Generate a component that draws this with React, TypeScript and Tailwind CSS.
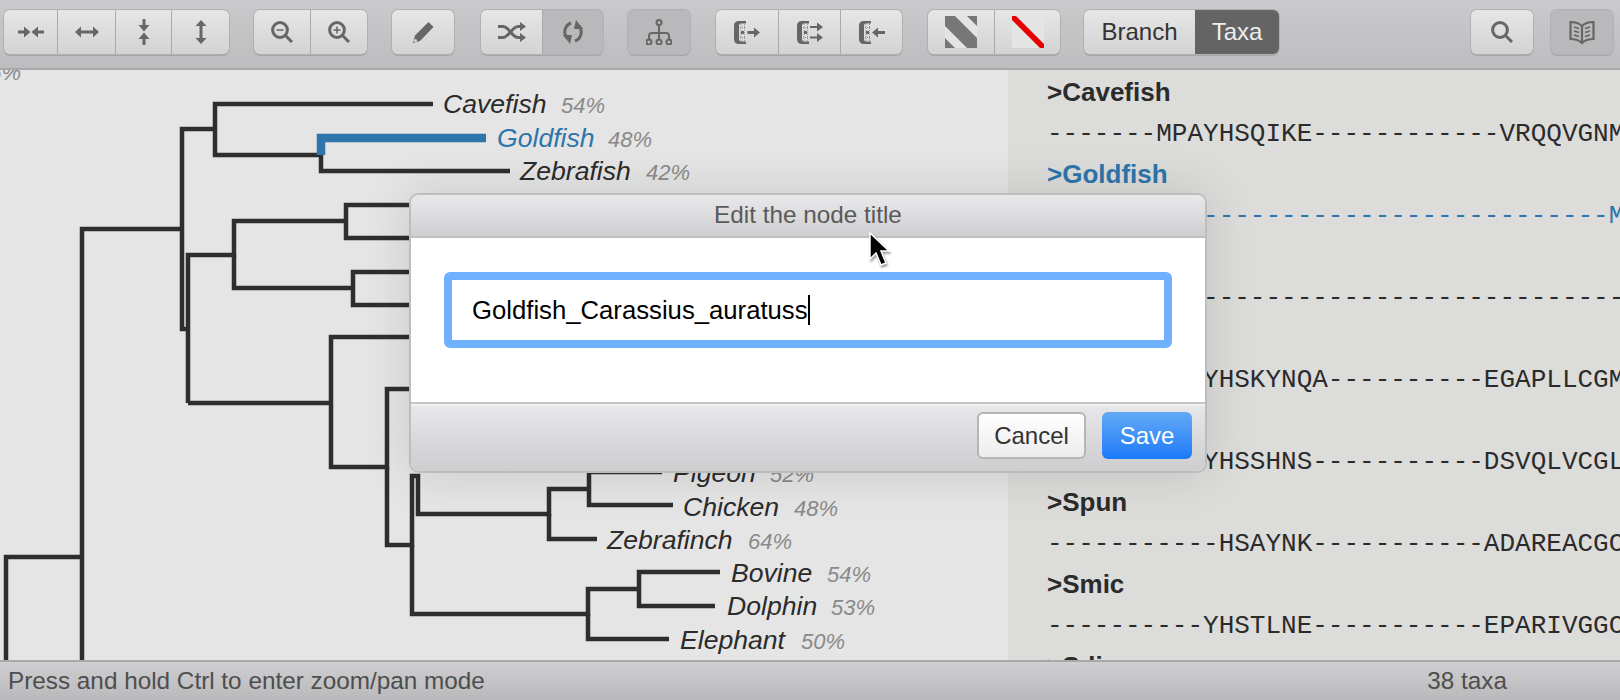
import { ReactNode } from "react";

// tree branches, in page coordinates (svg viewBox starts at y=70)
const branches = [
  "M433 104H215V155H321V171H510",
  "M215 129H182V329H188",
  "M82 660V229H182",
  "M6 660V557H82",
  "M188 660M188 403V255H234V221H346V205H460M346 221V238H460",
  "M234 255V288H353V272H460M353 288V305H460",
  "M188 403H331V337H460M331 403V467H387V389H460",
  "M387 467V545H412V476H418V514H549V489H589V472H662M589 489V505H673",
  "M549 514V539H597",
  "M412 545V614H588V589H639V572H720M639 589V606H715",
  "M588 614V639H669",
];

const labels = [
  { name: "Cavefish", pct: "54%", x: 443, y: 113, px: 561 },
  { name: "Goldfish", pct: "48%", x: 497, y: 147, px: 608, blue: true },
  { name: "Zebrafish", pct: "42%", x: 520, y: 180, px: 646 },
  { name: "Pigeon", pct: "52%", x: 673, y: 482, px: 770 },
  { name: "Chicken", pct: "48%", x: 683, y: 516, px: 794 },
  { name: "Zebrafinch", pct: "64%", x: 607, y: 549, px: 748 },
  { name: "Bovine", pct: "54%", x: 731, y: 582, px: 827 },
  { name: "Dolphin", pct: "53%", x: 727, y: 615, px: 831 },
  { name: "Elephant", pct: "50%", x: 680, y: 649, px: 801 },
];

// names that sit fully under the dialog are left blank
const sequences = [
  { name: ">Cavefish", seq: "-------MPAYHSQIKE------------VRQQVGNM" },
  { name: ">Goldfish", seq: "------------------------------------M", blue: true },
  { name: "", seq: "----------------------------------------" },
  { name: "", seq: "----------YHSKYNQA----------EGAPLLCGM" },
  { name: "", seq: "----------YHSSHNS-----------DSVQLVCGL" },
  { name: ">Spun", seq: "-----------HSAYNK-----------ADAREACGC" },
  { name: ">Smic", seq: "----------YHSTLNE-----------EPARIVGGC" },
  { name: ">Sdio", seq: "" },
];

const Btn = ({
  w,
  active,
  children,
}: {
  w: string;
  active?: boolean;
  children: ReactNode;
}) => (
  <div
    className={`${w} flex h-[44px] items-center justify-center border-l border-[#aaa9ab] first:border-l-0 ${
      active ? "bg-[#b9b8ba]" : "bg-gradient-to-b from-[#e6e6e6] to-[#d3d3d3]"
    }`}
  >
    {children}
  </div>
);

const Group = ({ className, children }: { className: string; children: ReactNode }) => (
  <div
    className={`${className} flex h-[44px] overflow-hidden rounded-[6px] shadow-[0_0_0_1px_#b0afb1,0_2px_1px_#a5a4a6]`}
  >
    {children}
  </div>
);

const Lens = ({ mark }: { mark?: "plus" | "minus" }) => (
  <svg width="22" height="22" viewBox="0 0 22 22" fill="none" stroke="#666">
    <circle cx="9" cy="9" r="7.400" strokeWidth="3" />
    <path d="M14.500 14.500L21 21" strokeWidth="3" />
    {mark && <path d="M5.500 9H12.500" strokeWidth="1.500" />}
    {mark === "plus" && <path d="M9 5.500V12.500" strokeWidth="1.500" />}
  </svg>
);

const ArrowsIn = ({ className }: { className?: string }) => (
  <svg className={className} width="26" height="14" viewBox="0 0 26 14" fill="#666">
    <path d="M0 5.500H6V1.500L12.500 7L6 12.500V8.500H0Z" />
    <path d="M26 5.500H20V1.500L13.500 7L20 12.500V8.500H26Z" />
  </svg>
);

const ArrowsOut = ({ className }: { className?: string }) => (
  <svg className={className} width="24" height="14" viewBox="0 0 24 14" fill="#666">
    <path d="M0 7L6 1.500V5.500H18V1.500L24 7L18 12.500V8.500H6V12.500Z" />
  </svg>
);

const ColumnIcon = ({ mode }: { mode: "out" | "both" | "in" }) => (
  <svg width="26" height="23" viewBox="0 0 26 23" fill="#666">
    <path d="M12 0H5Q0 0 0 5V18Q0 23 5 23H12V20.500H7Q5 20.500 5 18.500V4.500Q5 2.500 7 2.500H12Z" />
    <path d="M6 6.500H11M6 16.500H11M7 3V20M10.500 3V20" stroke="#888" strokeWidth="0.800" strokeDasharray="1 1" fill="none" />
    <rect x="7" y="10" width="3" height="3" />
    {mode === "out" && <path d="M13.500 10H20V6.500L26 11.500L20 16.500V13H13.500Z" />}
    {mode === "in" && <path d="M26 10H19V6.500L13 11.500L19 16.500V13H26Z" />}
    {mode === "both" && (
      <path d="M13 5H20V1.500L26 6L20 10.500V7H13ZM13 15.500H20V12L26 16.500L20 21V17.500H13Z" />
    )}
  </svg>
);

const App = () => {
  return (
    <div className="relative flex h-[700px] w-[1620px] flex-col overflow-hidden bg-[#e5e5e5] font-['Liberation_Sans',Arial,sans-serif]">
      {/* TOOLBAR */}
      <div className="flex h-[70px] shrink-0 border-b-2 border-[#a9a8aa] bg-gradient-to-b from-[#cac9cb] to-[#bdbcbe] pl-[4px] pr-[7px] pt-[10px]">
        <Group className="mr-[25px]">
          <Btn w="w-[53px]"><ArrowsIn /></Btn>
          <Btn w="w-[58px]"><ArrowsOut /></Btn>
          <Btn w="w-[56px]"><ArrowsIn className="rotate-90" /></Btn>
          <Btn w="w-[58px]"><ArrowsOut className="rotate-90" /></Btn>
        </Group>
        <Group className="mr-[25px]">
          <Btn w="w-[56px]"><Lens mark="minus" /></Btn>
          <Btn w="w-[57px]"><Lens mark="plus" /></Btn>
        </Group>
        <Group className="mr-[27px]">
          <Btn w="w-[62px]">
            <svg width="22" height="23" viewBox="0 0 22 23">
              <path d="M16.500 1L21.500 6L8 20L1 22L3 14.500Z" fill="#666" />
              <circle cx="3.500" cy="19.500" r="1.500" fill="#ddd" />
            </svg>
          </Btn>
        </Group>
        <Group className="mr-[25px]">
          <Btn w="w-[61px]">
            <svg width="28" height="20" viewBox="0 0 28 20" fill="none" stroke="#666" strokeWidth="3">
              <path d="M0 4.500H5C11 4.500 14 15.500 20 15.500H24" />
              <path d="M0 15.500H5C11 15.500 14 4.500 20 4.500H24" />
              <path d="M22 0L28 4.500L22 9ZM22 11L28 15.500L22 20Z" fill="#666" stroke="none" />
            </svg>
          </Btn>
          <Btn w="w-[61px]" active>
            <svg width="24" height="24" viewBox="0 0 24 24" fill="none" stroke="#666" strokeWidth="3">
              <path d="M10 3A9.500 9.500 0 0 0 6 18" />
              <path d="M14 21A9.500 9.500 0 0 0 18 6" />
              <path d="M2 15L11 15L9 24ZM22 9L13 9L15 0Z" fill="#666" stroke="none" />
            </svg>
          </Btn>
        </Group>
        <Group className="mr-[26px]">
          <Btn w="w-[62px]" active>
            <svg width="26" height="26" viewBox="0 0 26 26" fill="none" stroke="#666" strokeWidth="2">
              <circle cx="13" cy="3.500" r="2.500" />
              <path d="M13 6V20M3 20V17Q3 14 6 14H20Q23 14 23 17V20" />
              <circle cx="3" cy="23" r="2.500" />
              <circle cx="13" cy="23" r="2.500" />
              <circle cx="23" cy="23" r="2.500" />
            </svg>
          </Btn>
        </Group>
        <Group className="mr-[26px]">
          <Btn w="w-[62px]"><ColumnIcon mode="out" /></Btn>
          <Btn w="w-[62px]"><ColumnIcon mode="both" /></Btn>
          <Btn w="w-[62px]"><ColumnIcon mode="in" /></Btn>
        </Group>
        <Group className="mr-[24px]">
          <Btn w="w-[66px]">
            <svg width="32" height="32" viewBox="0 0 32 32">
              <rect width="32" height="32" fill="#e4e4e4" />
              <path d="M0 0H10L32 22V32H22L0 10ZM22 0H32V10ZM0 22L10 32H0Z" fill="#777" />
            </svg>
          </Btn>
          <Btn w="w-[66px]">
            <svg width="32" height="32" viewBox="0 0 32 32">
              <rect width="32" height="32" fill="#e4e4e4" />
              <path d="M0 0H4L32 28V32H28L0 4Z" fill="#e60000" />
            </svg>
          </Btn>
        </Group>
        <Group className="">
          <Btn w="w-[111px]"><span className="text-[24px] text-[#333]">Branch</span></Btn>
          <div className="flex h-[44px] w-[84px] items-center justify-center bg-[#646464] text-[24px] text-[#eee]">Taxa</div>
        </Group>
        <Group className="ml-auto mr-[18px]">
          <Btn w="w-[62px]"><Lens /></Btn>
        </Group>
        <Group className="">
          <Btn w="w-[62px]" active>
            <svg width="26" height="25" viewBox="0 0 26 25" fill="none" stroke="#666" strokeWidth="2.200">
              <path d="M13 6C10 3 5 2 1.500 2V19C5 19 10 20 13 23C16 20 21 19 24.500 19V2C21 2 16 3 13 6ZM13 6V23" />
              <path d="M5 7L10 8.500M5 11L10 12.500M5 15L10 16.500M21 7L16 8.500M21 11L16 12.500M21 15L16 16.500" strokeWidth="1.600" />
            </svg>
          </Btn>
        </Group>
      </div>

      {/* PANES */}
      <div className="flex min-h-0 flex-1">
        <div className="w-[1008px] shrink-0 overflow-hidden bg-[#e5e5e5]">
          <svg width="1008" height="590" viewBox="0 70 1008 590" className="block italic">
            <text x="21" y="80" textAnchor="end" fontSize="22" fill="#8a8a8a">56%</text>
            <g fill="none" stroke="#2e2e2e" strokeWidth="4.500">
              {branches.map((d) => (
                <path key={d} d={d} />
              ))}
            </g>
            <path d="M486 138H321V155" fill="none" stroke="#2e75ab" strokeWidth="8.500" />
            {labels.map((l) => (
              <g key={l.name}>
                <text x={l.x} y={l.y} fontSize="26.600" fill={l.blue ? "#2e75ab" : "#2b2b2b"}>{l.name}</text>
                <text x={l.px} y={l.y} fontSize="22" fill="#8a8a8a">{l.pct}</text>
              </g>
            ))}
          </svg>
        </div>

        <div className="min-w-0 flex-1 overflow-hidden bg-[#dcdcda] pl-[39px] pt-[2px] text-[#2b2b2b]">
          {sequences.map((s, i) => (
            <div key={i} className={s.blue ? "text-[#2e75ab]" : ""}>
              <div className="h-[41px] text-[26px] font-bold leading-[41px]">{s.name}</div>
              <div className="h-[41px] whitespace-pre pt-[1px] font-['Liberation_Mono',monospace] text-[26px] leading-[41px]">{s.seq}</div>
            </div>
          ))}
        </div>
      </div>

      {/* STATUS BAR */}
      <div className="flex h-[40px] shrink-0 items-center justify-between border-t-2 border-[#a9a8a9] bg-gradient-to-b from-[#cfced0] to-[#b9b8ba] pl-[8px] pr-[113px] text-[24.300px] text-[#4e4e4e]">
        <span>Press and hold Ctrl to enter zoom/pan mode</span>
        <span>38 taxa</span>
      </div>

      {/* DIALOG */}
      <div className="absolute left-[409px] top-[193px] flex h-[280px] w-[798px] flex-col overflow-hidden rounded-[10px] border-2 border-[#bdbdbd] bg-white shadow-[0_0_50px_rgba(0,0,0,0.13)]">
        <div className="flex h-[43px] shrink-0 items-center justify-center border-b-2 border-[#c0bfc0] bg-gradient-to-b from-[#e9e8ea] to-[#cfced0] text-[24.300px] text-[#5a5a5a]">
          Edit the node title
        </div>
        <div className="flex h-[164px] shrink-0 items-start px-[33px] pt-[34px]">
          <div className="flex h-[76px] w-[728px] items-center rounded-[6px] border-[8px] border-[#6eb1ff] bg-white pl-[20px] text-[25.700px] text-black">
            <span>Goldfish_Carassius_auratuss</span>
            <span className="h-[30px] w-[2px] bg-black" />
          </div>
        </div>
        <div className="flex flex-1 items-start justify-end gap-[16px] border-t-2 border-[#c4c4c4] bg-gradient-to-b from-[#e8e7e9] to-[#cdccce] pr-[13px] pt-[8px] shadow-[inset_0_2px_0_#f2f2f2]">
          <button className="h-[47px] w-[109px] rounded-[6px] border-2 border-[#b5b5b5] bg-gradient-to-b from-white to-[#ececec] text-[24px] text-[#333]">
            Cancel
          </button>
          <button className="h-[47px] w-[90px] rounded-[6px] bg-gradient-to-b from-[#62a9f6] to-[#1a7af8] text-[24px] text-white">
            Save
          </button>
        </div>
      </div>

      {/* MOUSE POINTER */}
      <svg className="absolute left-[866px] top-[231px]" width="26" height="38" viewBox="0 0 26 38">
        <path d="M4 2V28L10 22L15 34L20 32L15 20H23Z" fill="#000" stroke="#fff" strokeWidth="1.500" style={{ filter: "drop-shadow(1px 2px 1px rgba(0,0,0,0.4))" }} />
      </svg>
    </div>
  );
};

export default App;
